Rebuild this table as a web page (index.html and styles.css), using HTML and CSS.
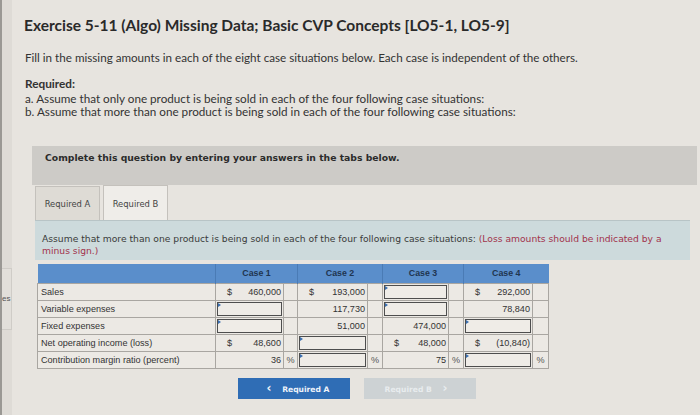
FILE: index.html
```html
<!DOCTYPE html>
<html>
<head>
<meta charset="utf-8">
<link rel="stylesheet" href="styles.css">
</head>
<body>
<div class="page">
  <aside class="edge">
    <div class="edge-box">es</div>
  </aside>
  <main class="content">
    <h1 class="title">Exercise 5-11 (Algo) Missing Data; Basic CVP Concepts [LO5-1, LO5-9]</h1>
    <p class="intro">Fill in the missing amounts in each of the eight case situations below. Each case is independent of the others.</p>
    <div class="req">
      <div class="req-head">Required:</div>
      <div>a. Assume that only one product is being sold in each of the four following case situations:</div>
      <div>b. Assume that more than one product is being sold in each of the four following case situations:</div>
    </div>
    <div class="bar">Complete this question by entering your answers in the tabs below.</div>
    <div class="tabs">
      <div class="tab">Required A</div>
      <div class="tab active">Required B</div>
    </div>
    <div class="instr"><p class="instr-text">Assume that more than one product is being sold in each of the four following case situations: <span class="warn">(Loss amounts should be indicated by a minus sign.)</span></p></div>
    <table class="grid">
      <colgroup>
        <col class="c-label">
        <col class="c1v"><col class="c1p">
        <col class="c2v"><col class="c2p">
        <col class="c3v"><col class="c3p">
        <col class="c4v"><col class="c4p">
      </colgroup>
      <thead>
        <tr>
          <th></th>
          <th colspan="2">Case 1</th>
          <th colspan="2">Case 2</th>
          <th colspan="2">Case 3</th>
          <th colspan="2">Case 4</th>
        </tr>
      </thead>
      <tbody>
        <tr>
          <td class="label">Sales</td>
          <td><div class="val"><span>$</span><span>460,000</span></div></td><td></td>
          <td><div class="val"><span>$</span><span>193,000</span></div></td><td></td>
          <td><div class="inp"></div></td><td></td>
          <td><div class="val"><span>$</span><span>292,000</span></div></td><td></td>
        </tr>
        <tr>
          <td class="label">Variable expenses</td>
          <td><div class="inp"></div></td><td></td>
          <td><div class="val"><span></span><span>117,730</span></div></td><td></td>
          <td><div class="inp"></div></td><td></td>
          <td><div class="val"><span></span><span>78,840</span></div></td><td></td>
        </tr>
        <tr>
          <td class="label">Fixed expenses</td>
          <td><div class="inp"></div></td><td></td>
          <td><div class="val"><span></span><span>51,000</span></div></td><td></td>
          <td><div class="val"><span></span><span>474,000</span></div></td><td></td>
          <td><div class="inp"></div></td><td></td>
        </tr>
        <tr>
          <td class="label">Net operating income (loss)</td>
          <td><div class="val"><span>$</span><span>48,600</span></div></td><td></td>
          <td><div class="inp"></div></td><td></td>
          <td><div class="val"><span>$</span><span>48,000</span></div></td><td></td>
          <td><div class="val"><span>$</span><span>(10,840)</span></div></td><td></td>
        </tr>
        <tr>
          <td class="label">Contribution margin ratio (percent)</td>
          <td><div class="val"><span></span><span>36</span></div></td><td class="pct">%</td>
          <td><div class="inp"></div></td><td class="pct">%</td>
          <td><div class="val"><span></span><span>75</span></div></td><td class="pct">%</td>
          <td><div class="inp"></div></td><td class="pct">%</td>
        </tr>
      </tbody>
    </table>
    <div class="nav">
      <div class="btn btn-prev"><span class="chev">&lsaquo;</span> Required A</div>
      <div class="btn btn-next">Required B <span class="chev">&rsaquo;</span></div>
    </div>
  </main>
</div>
</body>
</html>
```
FILE: styles.css
```css
html, body {
  margin: 0;
  padding: 0;
}
body {
  background: #e7e4df;
  width: 700px;
  height: 415px;
  overflow: hidden;
  font-family: "Liberation Sans", Arial, sans-serif;
  color: #2e2e2e;
}
.page {
  display: flex;
  height: 415px;
}
.edge {
  width: 12px;
  flex: none;
  border-left: 2px solid #9a9894;
  background: #dedbd6;
  padding-top: 268px;
  box-sizing: border-box;
}
.edge-box {
  height: 60px;
  border: 1px solid #cfccc7;
  border-left: none;
  background: #e2dfda;
  font-size: 8px;
  color: #555;
  line-height: 60px;
  overflow: hidden;
}
.content {
  flex: 1;
  padding-left: 12px;
}
.title {
  margin: 16px 0 0;
  font-family: "Lato", "Liberation Sans", sans-serif;
  font-weight: 700;
  font-size: 15.5px;
  line-height: 18px;
  color: #2a2a2a;
}
.intro {
  margin: 17px 0 0 1px;
  font-family: "Lato", "Liberation Sans", sans-serif;
  font-size: 11.65px;
  line-height: 14px;
  color: #333;
}
.req {
  margin: 12px 0 0 1px;
  font-family: "Lato", "Liberation Sans", sans-serif;
  font-size: 11.7px;
  line-height: 13.5px;
  color: #333;
}
.req-head {
  font-weight: 700;
  font-size: 11.8px;
  margin-bottom: 1px;
}
.bar {
  margin: 27px 0 0 8px;
  width: 665px;
  height: 39px;
  box-sizing: border-box;
  background: #cdcbc7;
  padding: 6px 0 0 13px;
  font-family: "DejaVu Sans", Verdana, sans-serif;
  font-weight: 700;
  font-size: 9.25px;
  color: #2b2b2b;
}
.tabs {
  display: flex;
  gap: 3px;
  margin: 0 0 0 11px;
  align-items: flex-end;
  height: 35px;
}
.tab {
  width: 65px;
  height: 34px;
  box-sizing: border-box;
  border: 1px solid #c4c1bc;
  border-bottom: none;
  background: #dedbd5;
  font-family: "DejaVu Sans", Verdana, sans-serif;
  font-size: 8.4px;
  color: #444;
  text-align: center;
  line-height: 34px;
}
.tab.active {
  background: #efede9;
  height: 35px;
  line-height: 36px;
}
.instr {
  margin-left: 11px;
  width: 655px;
  height: 40px;
  box-sizing: border-box;
  background: #cddadc;
  border-top: 1px solid #b8c4c6;
  padding: 12px 0 0 7px;
}
.instr-text {
  margin: 0;
  width: 630px;
  font-family: "DejaVu Sans", Verdana, sans-serif;
  font-size: 9.2px;
  line-height: 12px;
  color: #3a3a3a;
}
.warn {
  color: #a2334c;
}
.grid {
  margin: 4px 0 0 13px;
  border-collapse: collapse;
  table-layout: fixed;
  width: 511px;
  font-family: "Liberation Sans", Arial, sans-serif;
  font-size: 9.1px;
  color: #333;
}
.c-label { width: 178px; }
.c1v { width: 68px; }
.c1p { width: 14px; }
.c2v { width: 70px; }
.c2p { width: 15px; }
.c3v { width: 66px; }
.c3p { width: 15px; }
.c4v { width: 69px; }
.c4p { width: 16px; }
.grid th {
  background: #5a8ecb;
  height: 19px;
  font-weight: 700;
  font-size: 8.8px;
  color: #1f3550;
  border-left: 1px solid #4a7bb5;
  padding: 0;
}
.grid th:first-child {
  border-left: none;
}
.grid td {
  height: 16px;
  border: 1px solid #a9a6a1;
  background: #ece9e4;
  padding: 0;
}
.grid td.label {
  padding-left: 3px;
  white-space: nowrap;
}
.grid td.pct {
  text-align: center;
  color: #555;
}
.val {
  display: flex;
  justify-content: space-between;
  padding: 0 2px 0 11px;
}
.inp {
  height: 14px;
  margin: 0 1px;
  border: 1.5px solid #4e4e4e;
  box-sizing: border-box;
  background: #efece7;
  position: relative;
}
.inp::before {
  content: "";
  position: absolute;
  left: 0;
  top: 0;
  border-left: 3px solid #3a6fb0;
  border-top: 2px solid transparent;
  border-bottom: 2px solid transparent;
}
.nav {
  display: flex;
  gap: 14px;
  margin: 9px 0 0 214px;
}
.btn {
  width: 112px;
  height: 21px;
  line-height: 21px;
  text-align: center;
  font-family: "DejaVu Sans", Verdana, sans-serif;
  font-weight: 700;
  font-size: 7.6px;
}
.btn-prev {
  background: #2f6db5;
  color: #eef3fa;
}
.btn-next {
  background: #cdd2d4;
  color: #e8ecee;
}
.chev {
  font-size: 12px;
  margin: 0 8px;
}
```
